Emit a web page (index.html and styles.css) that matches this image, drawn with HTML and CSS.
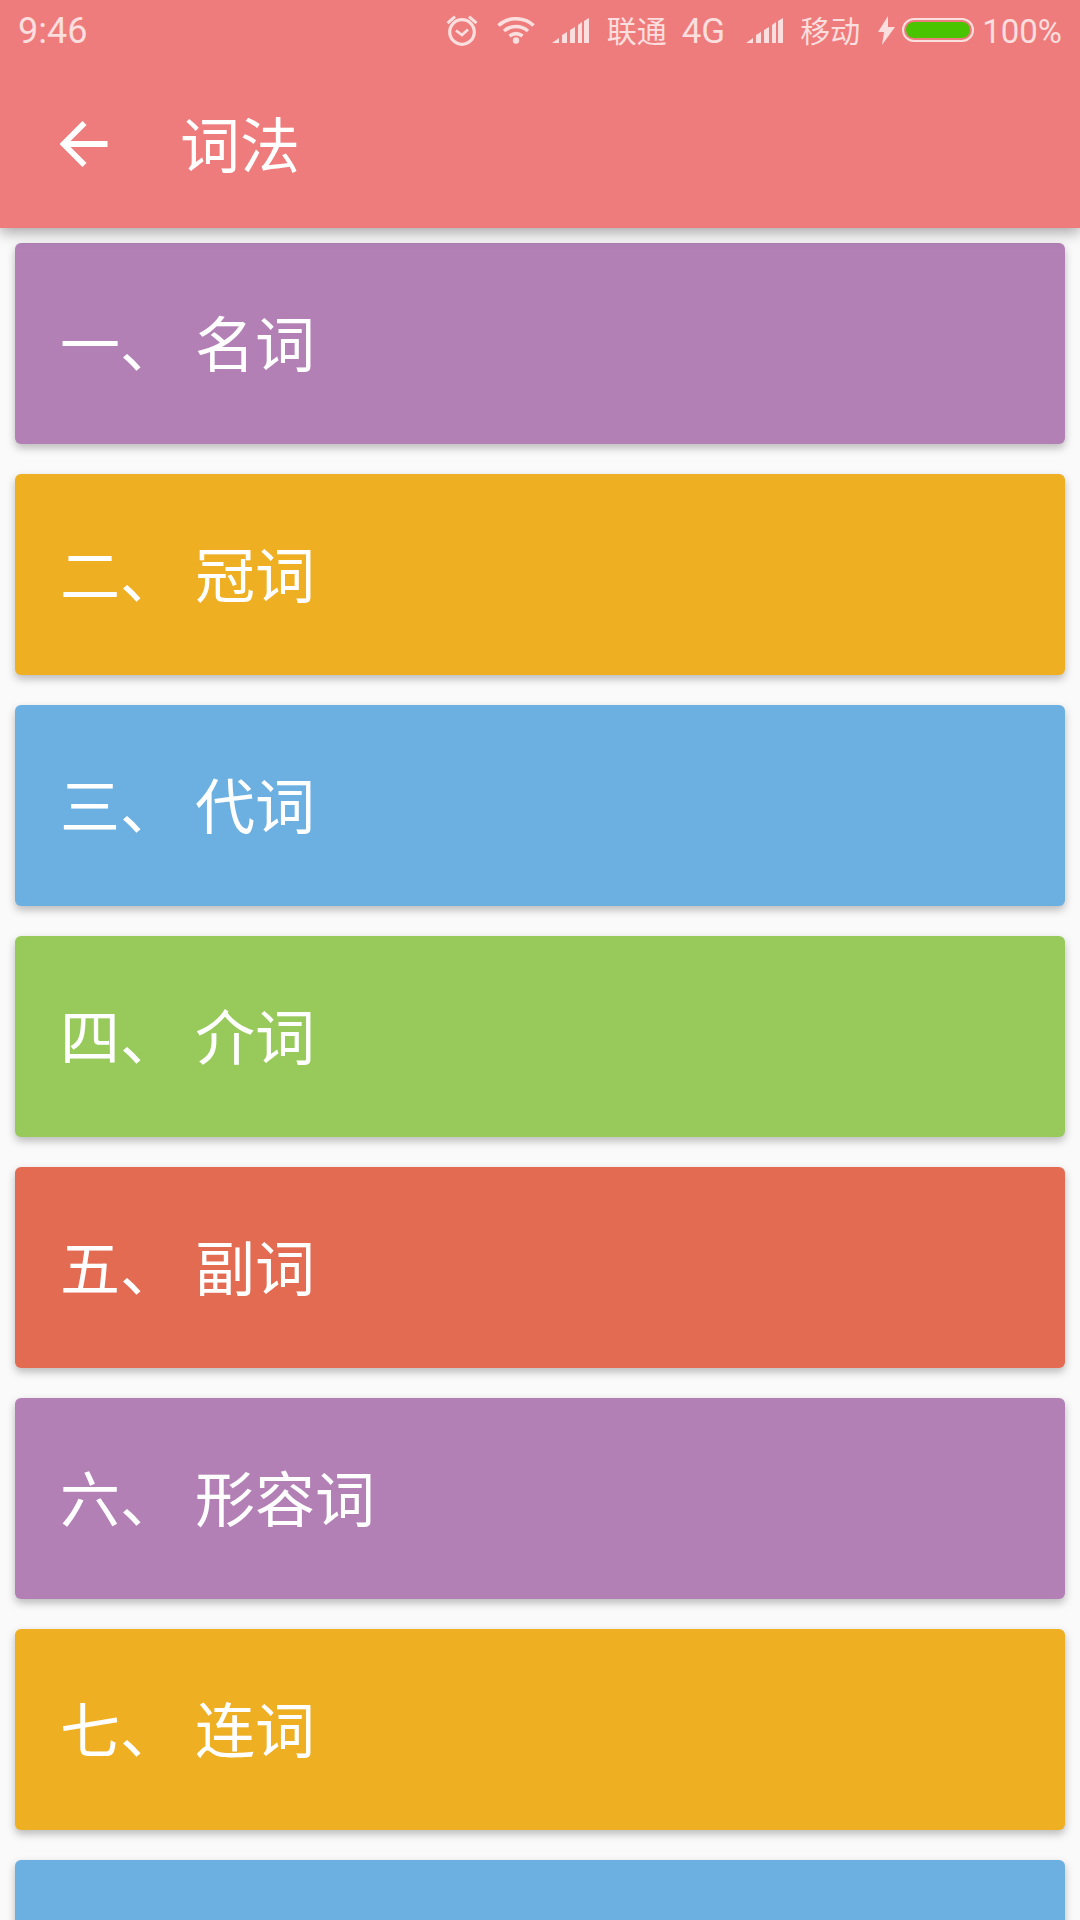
FILE: index.html
```html
<!DOCTYPE html>
<html lang="zh-CN">
<head>
  <meta charset="UTF-8">
  <title>词法</title>
  <link rel="stylesheet" href="styles.css">
</head>
<body>
  <header class="appbar">
    <div class="statusbar">
      <span class="clock">9:46</span>
      <div class="status-right">
        <svg class="ic-alarm" width="34" height="32" viewBox="0 0 34 32">
          <circle cx="17" cy="18" r="12.300" fill="none" stroke="currentColor" stroke-width="3.200"/>
          <path d="M11 16.500l6 4.500 6-5.500" fill="none" stroke="currentColor" stroke-width="2.800"/>
          <path d="M1.500 8l7.500-6.500 2 2.200-7.500 6.500zM32.500 8l-7.500-6.500-2 2.200 7.500 6.500z" fill="currentColor"/>
        </svg>
        <svg class="ic-wifi" width="38" height="27" viewBox="0 0 38 27">
          <path d="M1.500 8.500C11 -0.500 27 -0.500 36.500 8.500M7 14c7-6 17-6 24 0M12.500 19c4-3 9-3 13 0" fill="none" stroke="currentColor" stroke-width="3.600"/>
          <circle cx="19" cy="23.500" r="3.200" fill="currentColor"/>
        </svg>
        <svg class="ic-signal" width="37" height="25" viewBox="0 0 37 25">
          <path d="M0 25l7-5v5zM10 25v-8l5-3v11zM18 25v-13l5-3v16zM26 25v-18l4-3v21zM32 25v-22l5-3v25z" fill="currentColor"/>
        </svg>
        <span class="carrier">联通</span>
        <span class="net">4G</span>
        <svg class="ic-signal" width="37" height="25" viewBox="0 0 37 25">
          <path d="M0 25l7-5v5zM10 25v-8l5-3v11zM18 25v-13l5-3v16zM26 25v-18l4-3v21zM32 25v-22l5-3v25z" fill="currentColor"/>
        </svg>
        <span class="carrier carrier-2">移动</span>
        <svg class="ic-bolt" width="17" height="29" viewBox="0 0 17 29">
          <path d="M10 0L0 16h6L4 29 17 11h-7z" fill="currentColor"/>
        </svg>
        <div class="battery"><div class="battery-fill"></div></div>
        <span class="percent">100%</span>
      </div>
    </div>
    <div class="toolbar">
      <svg class="back" width="48" height="48" viewBox="0 0 48 48">
        <path d="M47.500 24H4M24.500 3L3.500 24l21 21" fill="none" stroke="#fff" stroke-width="5.800"/>
      </svg>
      <h1 class="title">词法</h1>
    </div>
  </header>

  <div class="list">
    <div class="card purple">一、 名词</div>
    <div class="card orange">二、 冠词</div>
    <div class="card blue">三、 代词</div>
    <div class="card green">四、 介词</div>
    <div class="card red">五、 副词</div>
    <div class="card purple">六、 形容词</div>
    <div class="card orange">七、 连词</div>
    <div class="card blue"></div>
  </div>
</body>
</html>
```

FILE: styles.css
```css
html, body {
  margin: 0;
  height: 1920px;
  overflow: hidden;
}
body {
  background: #fafafa;
  font-family: "Noto Sans CJK SC", Roboto, sans-serif;
  color: white;
}

.appbar {
  position: relative;
  height: 228px;
  background: #ef7c7c;
  box-shadow: 0 4px 14px rgba(0, 0, 0, 0.36);
}

.statusbar {
  height: 60px;
  display: flex;
  align-items: center;
  justify-content: space-between;
  padding: 0 18px;
  color: rgba(255, 255, 255, 0.75);
  font-family: Roboto, "Noto Sans CJK SC", sans-serif;
  font-size: 33px;
}
.clock {
  margin-top: 2px;
  font-size: 36px;
}
.status-right {
  display: flex;
  align-items: center;
}
.carrier {
  margin: -2px 0 0 18px;
  font-size: 30px;
}
.carrier-2 {
  margin-left: 17px;
}
.net {
  margin: 2px 21px 0 15px;
  font-size: 35px;
}
.ic-wifi {
  margin-left: 18px;
}
.ic-signal {
  margin-left: 17px;
}
.net + .ic-signal {
  margin-left: 0;
}
.ic-bolt {
  margin-left: 18px;
}
.battery {
  box-sizing: border-box;
  width: 72px;
  height: 24px;
  margin-left: 7px;
  padding: 2px;
  border: 2px solid rgba(255, 255, 255, 0.75);
  border-radius: 12px;
}
.battery-fill {
  height: 100%;
  background: #48c400;
  border-radius: 8px;
}
.percent {
  margin: 2px 0 0 8px;
  font-size: 33px;
}

.toolbar {
  display: flex;
  align-items: center;
  height: 168px;
  padding-left: 60px;
}
.back {
  flex: none;
}
.title {
  margin: 0 0 6px 72px;
  font-size: 60px;
  font-weight: 400;
}

.list {
  padding-top: 15px;
}
.card {
  box-sizing: border-box;
  height: 201px;
  margin: 0 15px 30px;
  padding: 0 0 7px 45px;
  display: flex;
  align-items: center;
  font-size: 60px;
  white-space: pre;
  word-spacing: 1.500px;
  border-radius: 6px;
  box-shadow: 0 4px 8px rgba(0, 0, 0, 0.26);
}
.purple { background: #b280b5; }
.orange { background: #eeaf23; }
.blue { background: #6cafe1; }
.green { background: #97ca5a; }
.red { background: #e26b52; }
```
